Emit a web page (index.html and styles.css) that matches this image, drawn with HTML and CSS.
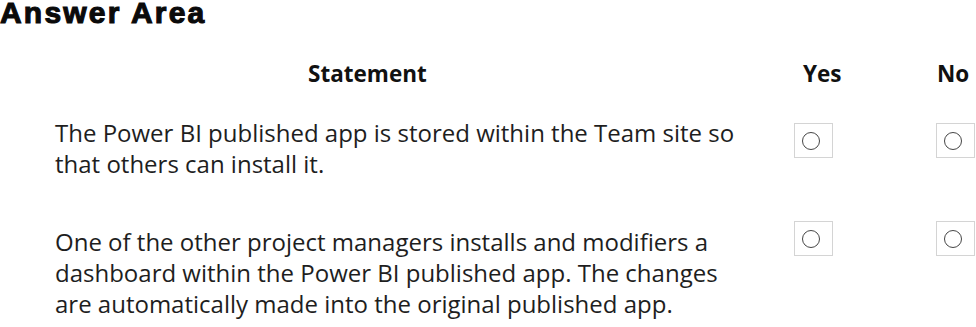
FILE: index.html
```html
<!DOCTYPE html>
<html lang="en">
<head>
<meta charset="utf-8">
<title>Answer Area</title>
<link rel="stylesheet" href="styles.css">
</head>
<body>
<main class="page">
  <h1 class="title">Answer Area</h1>
  <div class="table">
    <div class="head head-statement">Statement</div>
    <div class="head head-yes">Yes</div>
    <div class="head head-no">No</div>

    <div class="statement row1">The Power BI published app is stored within the Team site so<br>that others can install it.</div>
    <div class="answer row1"><span class="box"><span class="radio"></span></span></div>
    <div class="answer row1"><span class="box"><span class="radio"></span></span></div>

    <div class="statement row2">One of the other project managers installs and modifiers a<br>dashboard within the Power BI published app. The changes<br>are automatically made into the original published app.</div>
    <div class="answer row2"><span class="box"><span class="radio"></span></span></div>
    <div class="answer row2"><span class="box"><span class="radio"></span></span></div>
  </div>
</main>
</body>
</html>
```
FILE: styles.css
```css
html, body {
  margin: 0;
  padding: 0;
  background: #ffffff;
}
.page {
  width: 976px;
  height: 327px;
  overflow: hidden;
  font-family: "Open Sans", "Noto Sans", sans-serif;
  color: #1e1e1e;
}
.title {
  margin: 0;
  font-family: "Liberation Sans", Arial, sans-serif;
  font-weight: 700;
  font-size: 30px;
  line-height: 26px;
  letter-spacing: 2.2px;
  color: #0a0a0a;
  -webkit-text-stroke: 1.1px #0a0a0a;
}
.table {
  display: grid;
  grid-template-columns: 739px 142px 95px;
  padding-left: 55px;
  margin-top: 33px;
}
.head {
  font-weight: 700;
  font-size: 22.5px;
  line-height: 30px;
  color: #111;
}
.head-statement { padding-left: 253px; }
.head-yes { padding-left: 9px; }
.head-no { padding-left: 1px; }
.statement {
  font-size: 24px;
  line-height: 31px;
  white-space: nowrap;
}
.statement.row1 { margin-top: 28px; }
.statement.row2 { margin-top: 47px; }
.answer { display: flex; align-items: flex-start; }
.answer.row1 { margin-top: 34px; }
.answer.row2 { margin-top: 42px; }
.box {
  width: 30px;
  height: 33px;
  border: 1px solid #d4d4d4;
  display: flex;
  align-items: center;
  padding-left: 7px;
}
.radio {
  width: 16px;
  height: 16px;
  border: 1.6px solid #464646;
  border-radius: 50%;
}
```
